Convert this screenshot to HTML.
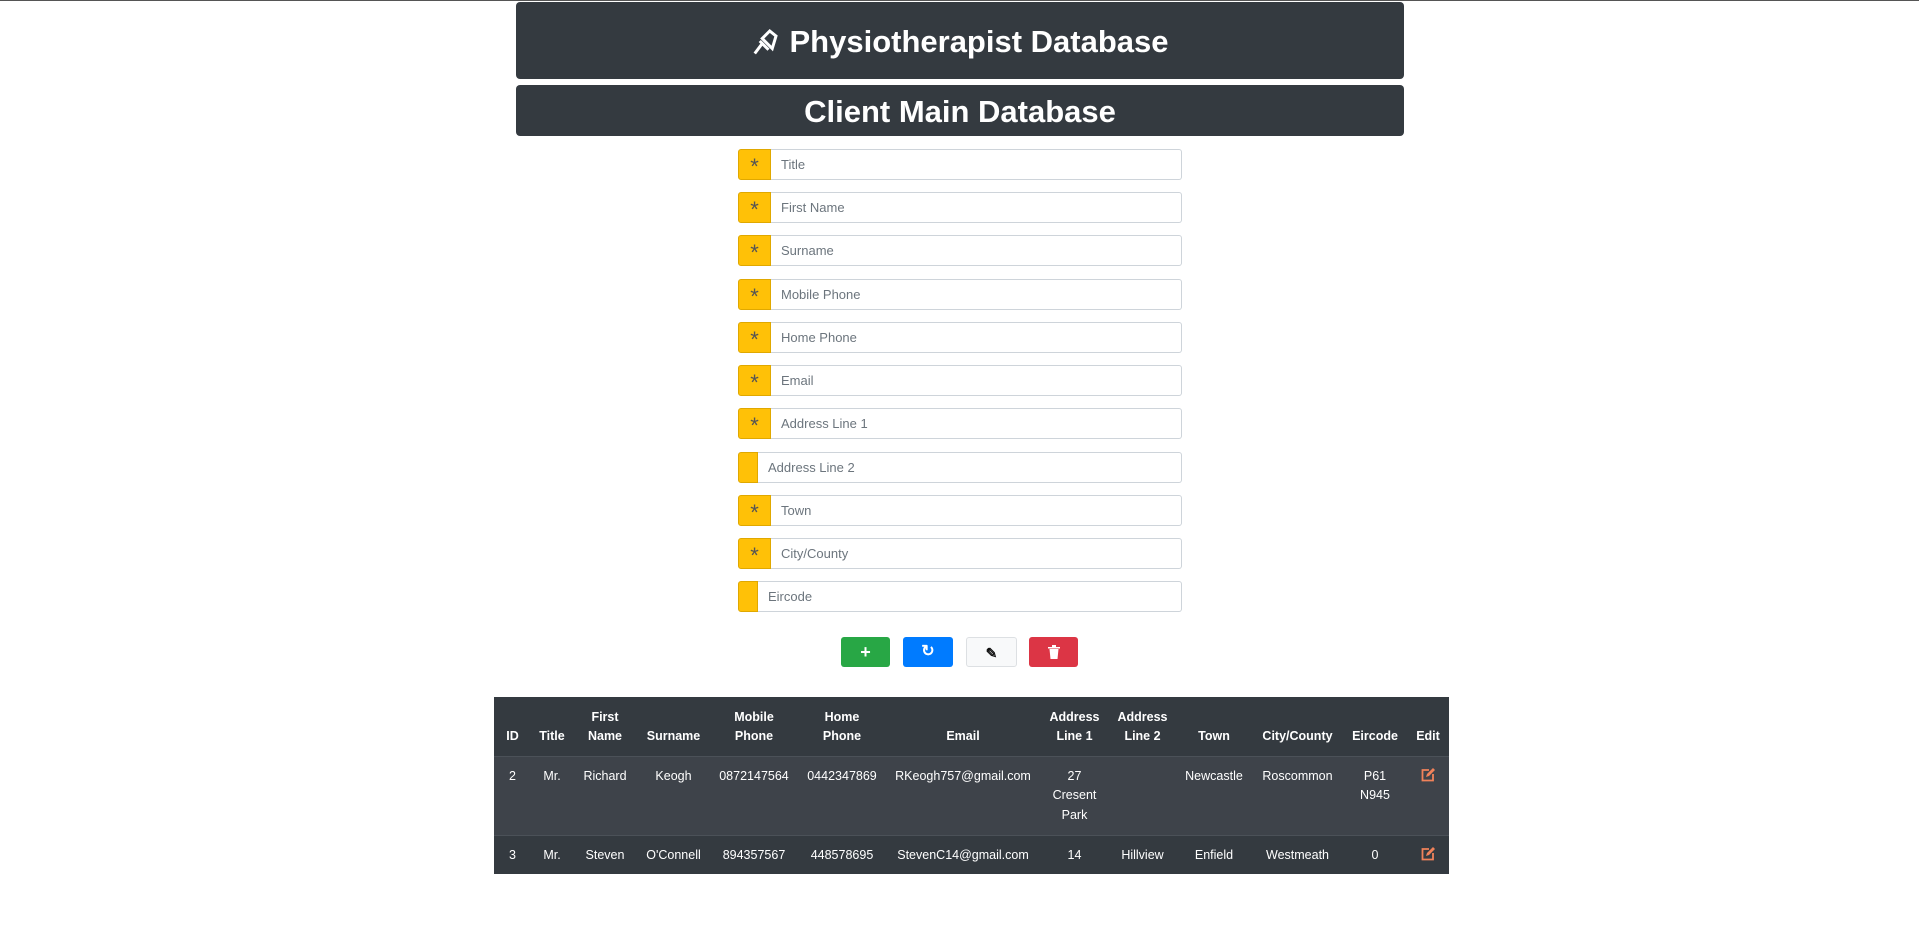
<!DOCTYPE html>
<html><head><meta charset="utf-8"><style>
*{box-sizing:border-box;margin:0;padding:0}
body{width:1919px;height:937px;background:#fff;font-family:"Liberation Sans",sans-serif;position:relative;overflow:hidden;border-top:1px solid #555}
.hdr{position:absolute;left:516px;width:888px;background:#343a40;border-radius:4px;color:#fff;text-align:center;font-weight:bold}
.h1{top:1px;height:77px;font-size:31px;line-height:80px}
.h2{top:84px;height:51px;font-size:31px;line-height:54px}
.row{position:absolute;left:738px;width:444px;height:31px;display:flex}
.pre{background:#ffc107;border:1px solid #e0a800;border-radius:3px 0 0 3px;width:33px;color:#555;font-size:22px;text-align:center;line-height:34px}
.pre.s{width:20px}
.inp{flex:1;border:1px solid #ced4da;border-left:none;border-radius:0 3px 3px 0;color:#6c757d;font-size:13px;line-height:29px;padding-left:10px}
.btn{position:absolute;top:636px;height:30px;border-radius:3px;color:#fff;text-align:center;line-height:30px;font-weight:bold;font-size:18px}
table{position:absolute;left:494px;top:696px;width:955px;border-collapse:collapse;table-layout:fixed;color:#fff;font-size:12.5px;text-align:center}
th{background:#343a40;height:59px;vertical-align:bottom;padding:0 1px 10px;line-height:19px}
td{padding:10px 1px 0;line-height:19.5px;vertical-align:top;border-top:1px solid #4b5158;background:#3e434a}
tr.r1 td{height:79px}
tr.r2 td{height:39px;background:#343a40}
.ed svg{margin-top:1px}
</style></head><body>
<div class="hdr h1"><svg width="30" height="30" viewBox="0 0 24 24" style="vertical-align:-4px;margin-right:8px"><path d="M3 22 L9 14 M7 12 L14 19 M9 10 L17 18 L20 8 L15 4 Z M11 12 L13 14" stroke="#fff" stroke-width="2.4" fill="none"/></svg>Physiotherapist Database</div>
<div class="hdr h2">Client Main Database</div>

<div class="row" style="top:148px"><div class="pre">*</div><div class="inp">Title</div></div>
<div class="row" style="top:191px"><div class="pre">*</div><div class="inp">First Name</div></div>
<div class="row" style="top:234px"><div class="pre">*</div><div class="inp">Surname</div></div>
<div class="row" style="top:278px"><div class="pre">*</div><div class="inp">Mobile Phone</div></div>
<div class="row" style="top:321px"><div class="pre">*</div><div class="inp">Home Phone</div></div>
<div class="row" style="top:364px"><div class="pre">*</div><div class="inp">Email</div></div>
<div class="row" style="top:407px"><div class="pre">*</div><div class="inp">Address Line 1</div></div>
<div class="row" style="top:451px"><div class="pre s"></div><div class="inp">Address Line 2</div></div>
<div class="row" style="top:494px"><div class="pre">*</div><div class="inp">Town</div></div>
<div class="row" style="top:537px"><div class="pre">*</div><div class="inp">City/County</div></div>
<div class="row" style="top:580px"><div class="pre s"></div><div class="inp">Eircode</div></div>

<div class="btn" style="left:841px;width:49px;background:#28a745">+</div>
<div class="btn" style="left:903px;width:50px;background:#007bff;font-size:16px">&#x21bb;</div>
<div class="btn" style="left:966px;width:51px;background:#f8f9fa;border:1px solid #dde0e3;color:#111;font-size:14px">&#x270E;</div>
<div class="btn" style="left:1029px;width:49px;background:#dc3545;font-size:14px"><svg width="12" height="14" viewBox="0 0 12 14" style="vertical-align:-2px"><path d="M0 2h12v1.5H0z M4 0h4v2H4z M1.5 4h9l-1 10h-7z" fill="#fff"/></svg></div>

<table>
<colgroup><col style="width:37px"><col style="width:42px"><col style="width:64px"><col style="width:73px"><col style="width:88px"><col style="width:88px"><col style="width:154px"><col style="width:69px"><col style="width:67px"><col style="width:76px"><col style="width:91px"><col style="width:64px"><col style="width:42px"></colgroup>
<tr><th>ID</th><th>Title</th><th>First<br>Name</th><th>Surname</th><th>Mobile<br>Phone</th><th>Home<br>Phone</th><th>Email</th><th>Address<br>Line 1</th><th>Address<br>Line 2</th><th>Town</th><th>City/County</th><th>Eircode</th><th>Edit</th></tr>
<tr class="r1"><td>2</td><td>Mr.</td><td>Richard</td><td>Keogh</td><td>0872147564</td><td>0442347869</td><td>RKeogh757@gmail.com</td><td>27<br>Cresent<br>Park</td><td></td><td>Newcastle</td><td>Roscommon</td><td>P61<br>N945</td><td class="ed"><svg width="14" height="14" viewBox="0 0 14 14"><path d="M8 2H1.5v10.5H12V6" stroke="#f0825a" stroke-width="1.8" fill="none"/><path d="M5 9l1-3 6-6 2 2-6 6z" fill="#f0825a"/></svg></td></tr>
<tr class="r2"><td>3</td><td>Mr.</td><td>Steven</td><td>O'Connell</td><td>894357567</td><td>448578695</td><td>StevenC14@gmail.com</td><td>14</td><td>Hillview</td><td>Enfield</td><td>Westmeath</td><td>0</td><td class="ed"><svg width="14" height="14" viewBox="0 0 14 14"><path d="M8 2H1.5v10.5H12V6" stroke="#f0825a" stroke-width="1.8" fill="none"/><path d="M5 9l1-3 6-6 2 2-6 6z" fill="#f0825a"/></svg></td></tr>
</table>
</body></html>
